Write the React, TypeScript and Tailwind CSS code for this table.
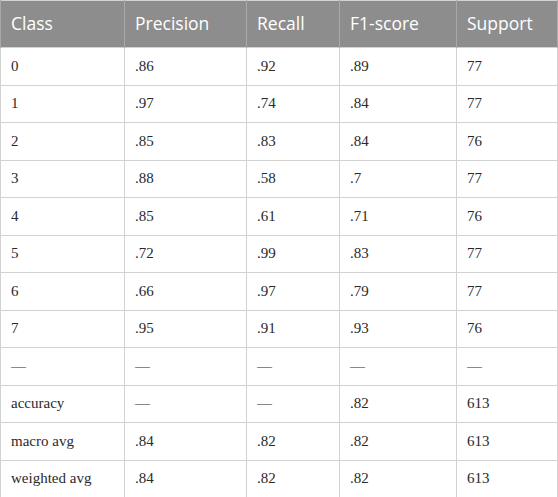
import React from "react";

const headers = ["Class", "Precision", "Recall", "F1-score", "Support"];
const widths = ["w-[124px]", "w-[122px]", "w-[93px]", "w-[117px]", "w-[101px]"];

const rows: string[][] = [
  ["0", ".86", ".92", ".89", "77"],
  ["1", ".97", ".74", ".84", "77"],
  ["2", ".85", ".83", ".84", "76"],
  ["3", ".88", ".58", ".7", "77"],
  ["4", ".85", ".61", ".71", "76"],
  ["5", ".72", ".99", ".83", "77"],
  ["6", ".66", ".97", ".79", "77"],
  ["7", ".95", ".91", ".93", "76"],
  ["—", "—", "—", "—", "—"],
  ["accuracy", "—", "—", ".82", "613"],
  ["macro avg", ".84", ".82", ".82", "613"],
  ["weighted avg", ".84", ".82", ".82", "613"],
];

export default function App() {
  return (
    <div className="w-[558px] h-[497px] bg-white">
      <table className="table-fixed border-collapse w-[557px] border border-[#d2d2d2]">
        <colgroup>
          {widths.map((w, i) => (
            <col key={i} className={w} />
          ))}
        </colgroup>
        <thead>
          <tr className="h-[47px] bg-[#8d8d8d]">
            {headers.map((h) => (
              <th
                key={h}
                className="border-x border-[#a9a9a9] px-[10px] text-left font-normal text-white text-[17.5px] font-['Open_Sans',sans-serif] leading-none"
              >
                {h}
              </th>
            ))}
          </tr>
        </thead>
        <tbody>
          {rows.map((r, i) => (
            <tr key={i} className="h-[37.5px]">
              {r.map((c, j) => (
                <td
                  key={j}
                  className="border border-[#d2d2d2] px-[10px] text-[15px] text-[#2a2a2a] font-['Liberation_Serif',serif] leading-none"
                >
                  {c}
                </td>
              ))}
            </tr>
          ))}
        </tbody>
      </table>
    </div>
  );
}
